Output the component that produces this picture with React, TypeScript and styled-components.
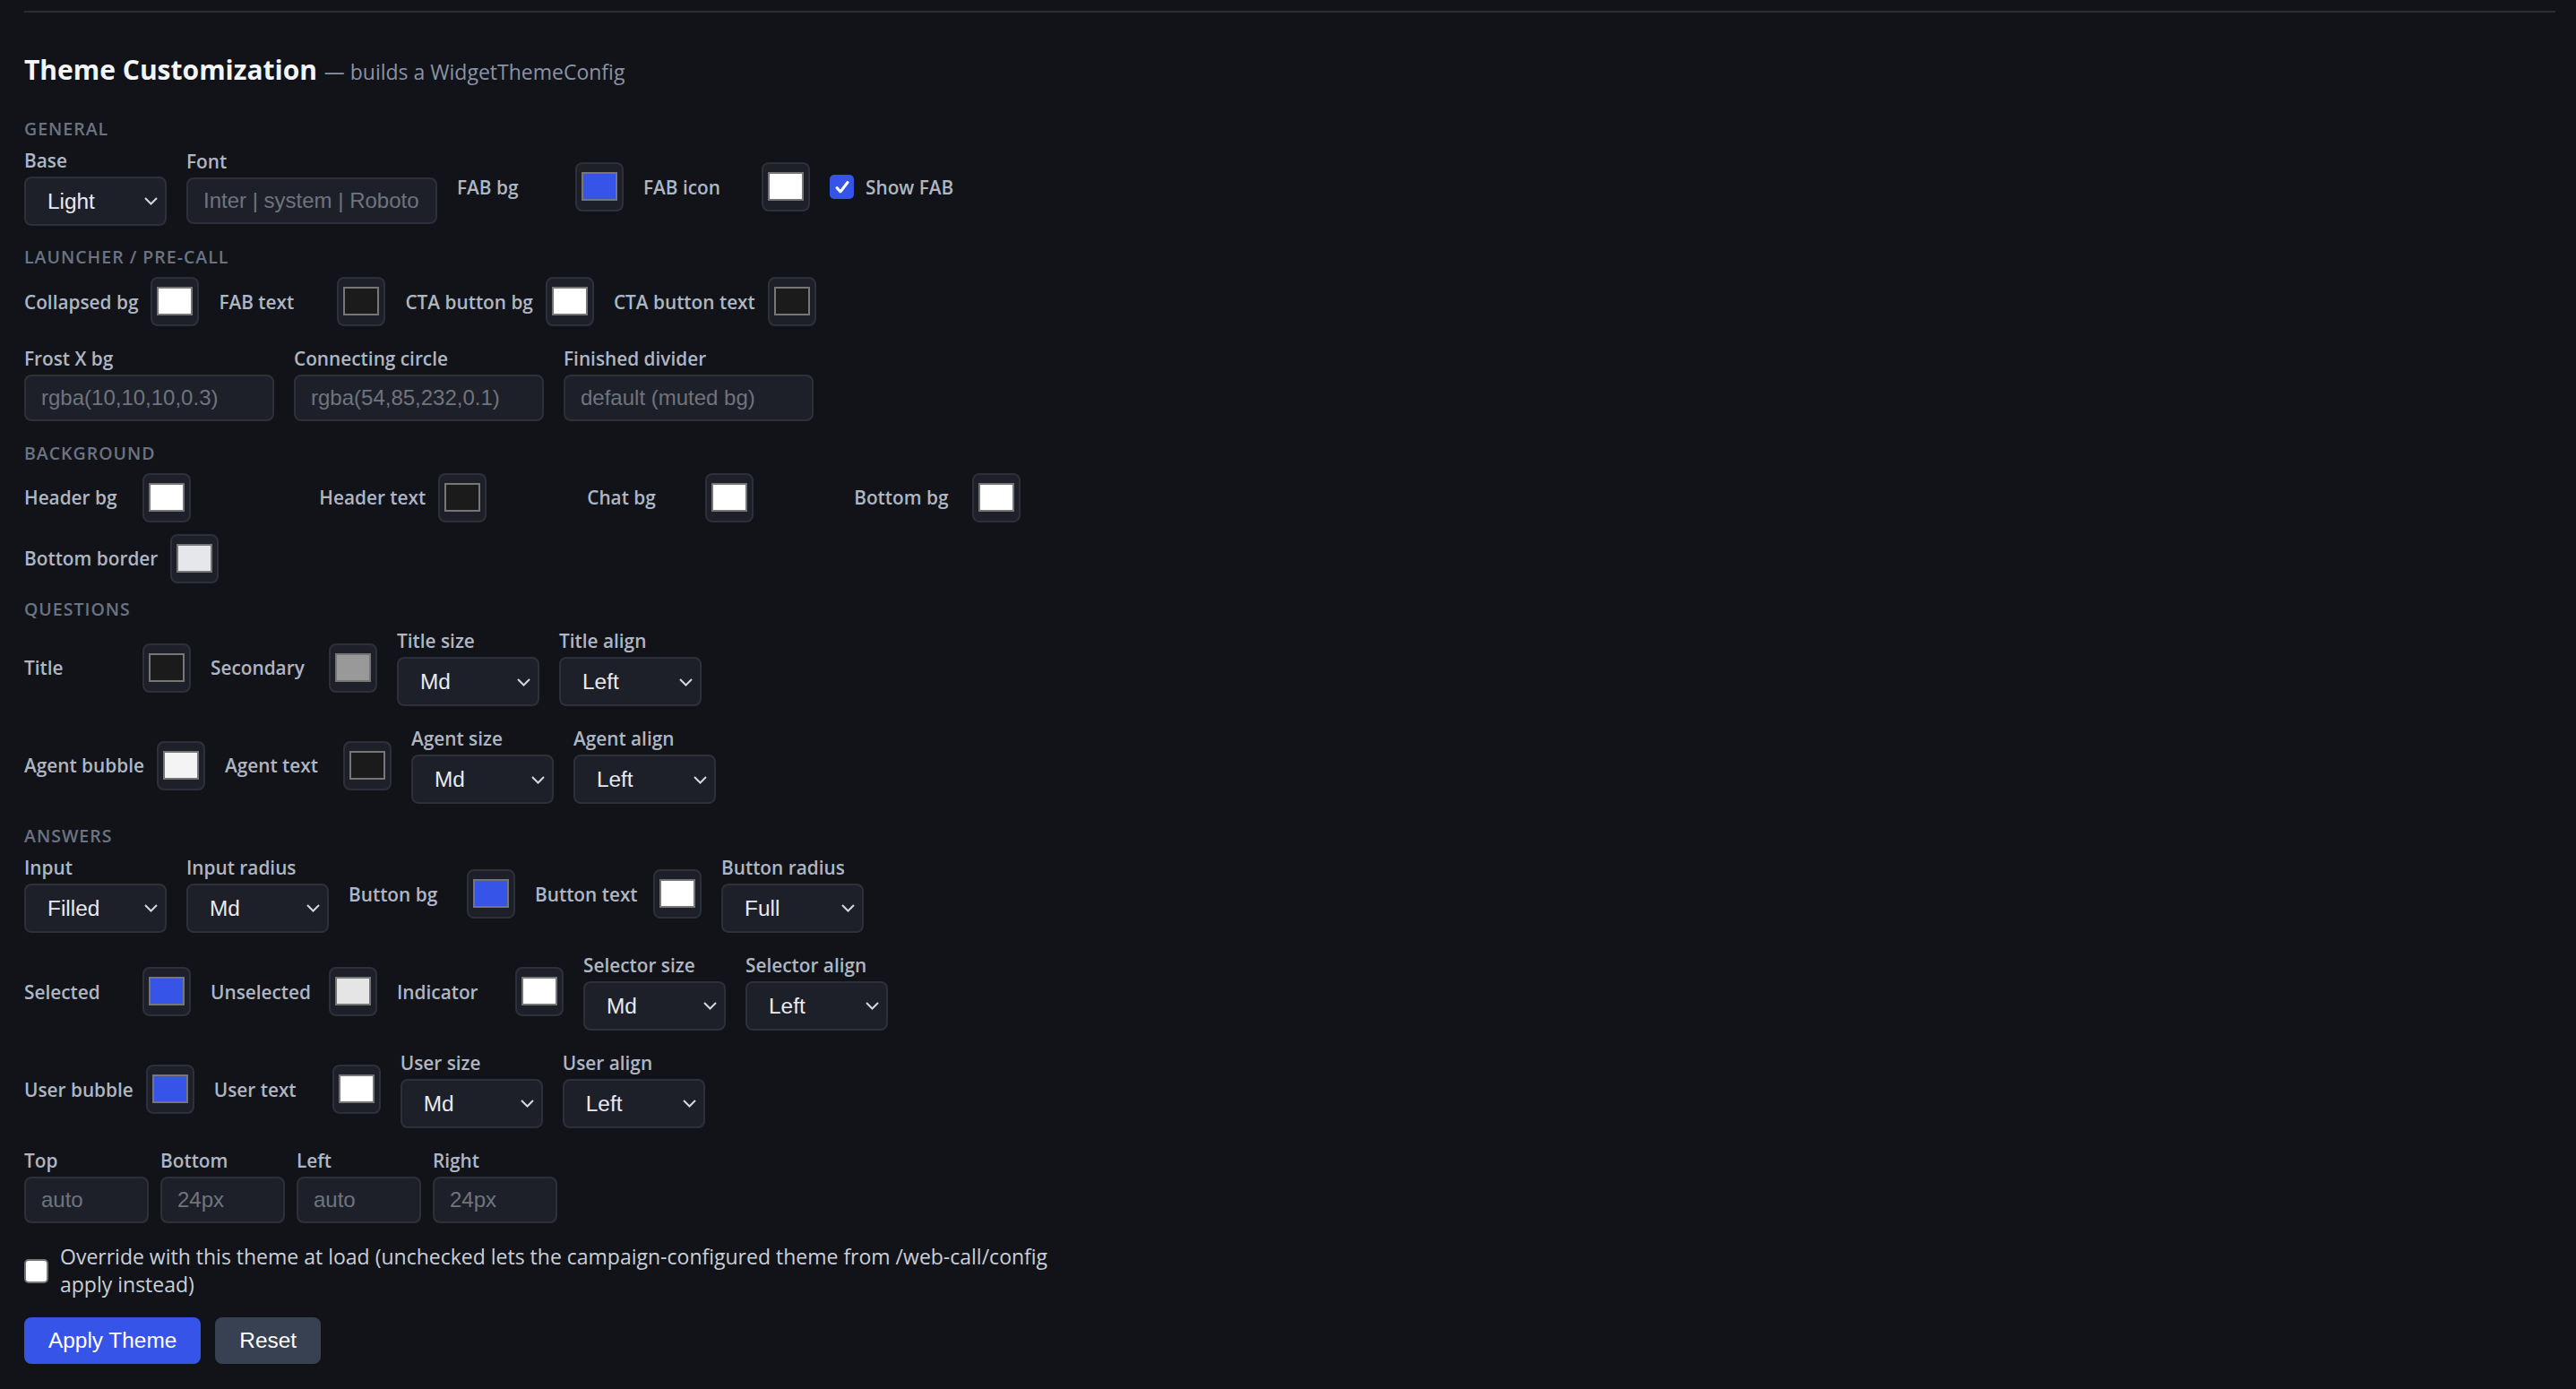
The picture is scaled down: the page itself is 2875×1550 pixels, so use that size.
import styled, { createGlobalStyle } from 'styled-components'

const BLUE = '#3655e8'
const DARK = '#1b1b1b'
const WHITE = '#ffffff'

const GlobalStyle = createGlobalStyle`
  html, body {
    margin: 0;
    background: #111318;
  }
  body {
    font-family: 'Open Sans', 'Noto Sans', sans-serif;
    color: #aeb6c3;
  }
`

const Page = styled.main`
  padding: 12px 23px 40px 27px;
`

const Panel = styled.section`
  border-top: 2px solid #2a2d36;
  padding-top: 46px;
`

const Title = styled.h2`
  margin: 0;
  font-size: 30px;
  line-height: 36px;
  font-weight: 700;
  color: #f4f5f7;
`

const Subtitle = styled.span`
  font-size: 23px;
  line-height: 1;
  font-weight: 400;
  color: #8a93a6;
`

const Form = styled.div`
  margin-top: 34.5px;
  display: flex;
  flex-direction: column;
  gap: 22.5px;
`

const Section = styled.div``

const SectionLabel = styled.div`
  margin-bottom: 9px;
  font-size: 19.5px;
  line-height: 26px;
  font-weight: 600;
  letter-spacing: 1px;
  text-transform: uppercase;
  color: #6b7383;
`

const Rows = styled.div`
  display: flex;
  flex-direction: column;
  gap: 23px;
`

const Row = styled.div`
  display: flex;
  align-items: center;
  gap: 22px;
`

const SwatchGrid = styled.div`
  display: grid;
  grid-template-columns: repeat(4, max-content);
  column-gap: 112px;
  row-gap: 13px;
  margin-bottom: -6px;
`

const PositionRow = styled.div`
  display: flex;
  gap: 13px;
`

const Field = styled.label`
  display: flex;
  flex-direction: column;
  gap: 5px;
`

const Label = styled.span`
  font-size: 20.8px;
  line-height: 26px;
  font-weight: 600;
  color: #aeb6c3;
  white-space: nowrap;
`

const ColorGroup = styled.label`
  display: flex;
  align-items: center;
  gap: 14px;
`

const ColorLabel = styled(Label)`
  min-width: 118px;
`

const Swatch = styled.span<{ $color: string }>`
  display: flex;
  box-sizing: border-box;
  width: 54px;
  height: 55px;
  padding: 9px 5px 10px;
  border: 2px solid #2d303a;
  border-radius: 8px;
  background: #1e2029;

  &::after {
    content: '';
    flex: 1;
    border: 2px solid #767676;
    background: ${(p) => p.$color};
  }
`

const SelectWrap = styled.span<{ $width: number }>`
  position: relative;
  display: block;
  width: ${(p) => p.$width}px;
`

const Select = styled.select`
  appearance: none;
  display: block;
  box-sizing: border-box;
  width: 100%;
  height: 55px;
  margin: 0;
  padding: 0 40px 0 24px;
  border: 2px solid #2d303a;
  border-radius: 8px;
  background: #1e2029;
  color: #e8eaee;
  font: 24.4px 'Liberation Sans', Arial, sans-serif;
  outline: none;
`

const Chevron = styled.svg`
  position: absolute;
  right: 9px;
  top: 50%;
  margin-top: -5px;
  pointer-events: none;
`

const TextInput = styled.input<{ $width: number }>`
  box-sizing: border-box;
  width: ${(p) => p.$width}px;
  height: 52px;
  margin: 0;
  padding: 0 16px 0 17px;
  border: 2px solid #2d303a;
  border-radius: 8px;
  background: #1e2029;
  color: #e8eaee;
  font: 24px 'Liberation Sans', Arial, sans-serif;
  outline: none;

  &::placeholder {
    color: #6f747d;
  }
`

const CheckRow = styled.label<{ $maxWidth?: number }>`
  display: flex;
  align-items: center;
  gap: 13px;
  max-width: ${(p) => (p.$maxWidth ? `${p.$maxWidth}px` : 'none')};
`

const CheckBox = styled.span<{ $checked?: boolean }>`
  flex: none;
  box-sizing: border-box;
  display: flex;
  align-items: center;
  justify-content: center;
  width: 27px;
  height: 27px;
  border-radius: 5px;
  background: ${(p) => (p.$checked ? BLUE : '#ffffff')};
  border: ${(p) => (p.$checked ? 'none' : '2px solid #767676')};
`

const OverrideText = styled.span`
  font-size: 23px;
  line-height: 31px;
  color: #c9cfd9;
`

const Actions = styled.div`
  display: flex;
  gap: 16px;
  margin-top: 21px;
`

const Button = styled.button<{ $variant?: 'primary' | 'secondary' }>`
  height: 52px;
  padding: 0 27px;
  border: none;
  border-radius: 8px;
  font: 24.4px 'Liberation Sans', Arial, sans-serif;
  color: #ffffff;
  background: ${(p) => (p.$variant === 'secondary' ? '#384151' : BLUE)};
  cursor: pointer;
`

const SIZES = ['Sm', 'Md', 'Lg']
const ALIGNS = ['Left', 'Center', 'Right']
const RADII = ['None', 'Sm', 'Md', 'Lg', 'Full']

function ColorField({ label, color }: { label: string; color: string }) {
  return (
    <ColorGroup>
      <ColorLabel>{label}</ColorLabel>
      <Swatch $color={color} />
    </ColorGroup>
  )
}

function SelectField({ label, value, options }: { label: string; value: string; options: string[] }) {
  return (
    <Field>
      <Label>{label}</Label>
      <SelectWrap $width={159}>
        <Select defaultValue={value}>
          {options.map((o) => (
            <option key={o}>{o}</option>
          ))}
        </Select>
        <Chevron width="17" height="11" viewBox="0 0 17 11">
          <polyline points="2,2 8.5,8.5 15,2" fill="none" stroke="#d4d8de" strokeWidth="2" />
        </Chevron>
      </SelectWrap>
    </Field>
  )
}

function TextField({ label, placeholder, width }: { label: string; placeholder: string; width: number }) {
  return (
    <Field>
      <Label>{label}</Label>
      <TextInput $width={width} placeholder={placeholder} />
    </Field>
  )
}

function Check({ checked }: { checked?: boolean }) {
  return (
    <CheckBox $checked={checked}>
      {checked && (
        <svg width="20" height="20" viewBox="0 0 20 20">
          <polyline points="4,10.5 8,15 16,4.5" fill="none" stroke="#fff" strokeWidth="3" strokeLinecap="round" strokeLinejoin="round" />
        </svg>
      )}
    </CheckBox>
  )
}

export default function App() {
  return (
    <>
      <GlobalStyle />
      <Page>
        <Panel>
          <Title>
            Theme Customization <Subtitle>— builds a WidgetThemeConfig</Subtitle>
          </Title>

          <Form>
            <Section>
              <SectionLabel>General</SectionLabel>
              <Rows>
                <Row>
                  <SelectField label="Base" value="Light" options={['Light', 'Dark']} />
                  <TextField label="Font" placeholder="Inter | system | Roboto" width={280} />
                  <ColorField label="FAB bg" color={BLUE} />
                  <ColorField label="FAB icon" color={WHITE} />
                  <CheckRow>
                    <Check checked />
                    <Label>Show FAB</Label>
                  </CheckRow>
                </Row>
              </Rows>
            </Section>

            <Section>
              <SectionLabel>Launcher / Pre-call</SectionLabel>
              <Rows>
                <Row>
                  <ColorField label="Collapsed bg" color={WHITE} />
                  <ColorField label="FAB text" color={DARK} />
                  <ColorField label="CTA button bg" color={WHITE} />
                  <ColorField label="CTA button text" color={DARK} />
                </Row>
                <Row>
                  <TextField label="Frost X bg" placeholder="rgba(10,10,10,0.3)" width={279} />
                  <TextField label="Connecting circle" placeholder="rgba(54,85,232,0.1)" width={279} />
                  <TextField label="Finished divider" placeholder="default (muted bg)" width={279} />
                </Row>
              </Rows>
            </Section>

            <Section>
              <SectionLabel>Background</SectionLabel>
              <SwatchGrid>
                <ColorField label="Header bg" color={WHITE} />
                <ColorField label="Header text" color={DARK} />
                <ColorField label="Chat bg" color={WHITE} />
                <ColorField label="Bottom bg" color={WHITE} />
                <ColorField label="Bottom border" color="#e5e7eb" />
              </SwatchGrid>
            </Section>

            <Section>
              <SectionLabel>Questions</SectionLabel>
              <Rows>
                <Row>
                  <ColorField label="Title" color={DARK} />
                  <ColorField label="Secondary" color="#999999" />
                  <SelectField label="Title size" value="Md" options={SIZES} />
                  <SelectField label="Title align" value="Left" options={ALIGNS} />
                </Row>
                <Row>
                  <ColorField label="Agent bubble" color="#f4f4f5" />
                  <ColorField label="Agent text" color={DARK} />
                  <SelectField label="Agent size" value="Md" options={SIZES} />
                  <SelectField label="Agent align" value="Left" options={ALIGNS} />
                </Row>
              </Rows>
            </Section>

            <Section>
              <SectionLabel>Answers</SectionLabel>
              <Rows>
                <Row>
                  <SelectField label="Input" value="Filled" options={['Filled', 'Outlined']} />
                  <SelectField label="Input radius" value="Md" options={RADII} />
                  <ColorField label="Button bg" color={BLUE} />
                  <ColorField label="Button text" color={WHITE} />
                  <SelectField label="Button radius" value="Full" options={RADII} />
                </Row>
                <Row>
                  <ColorField label="Selected" color={BLUE} />
                  <ColorField label="Unselected" color="#e5e5e5" />
                  <ColorField label="Indicator" color={WHITE} />
                  <SelectField label="Selector size" value="Md" options={SIZES} />
                  <SelectField label="Selector align" value="Left" options={ALIGNS} />
                </Row>
                <Row>
                  <ColorField label="User bubble" color={BLUE} />
                  <ColorField label="User text" color={WHITE} />
                  <SelectField label="User size" value="Md" options={SIZES} />
                  <SelectField label="User align" value="Left" options={ALIGNS} />
                </Row>
                <PositionRow>
                  <TextField label="Top" placeholder="auto" width={139} />
                  <TextField label="Bottom" placeholder="24px" width={139} />
                  <TextField label="Left" placeholder="auto" width={139} />
                  <TextField label="Right" placeholder="24px" width={139} />
                </PositionRow>
              </Rows>
            </Section>

            <CheckRow $maxWidth={1170}>
              <Check />
              <OverrideText>
                Override with this theme at load (unchecked lets the campaign-configured theme from /web-call/config
                apply instead)
              </OverrideText>
            </CheckRow>
          </Form>

          <Actions>
            <Button>Apply Theme</Button>
            <Button $variant="secondary">Reset</Button>
          </Actions>
        </Panel>
      </Page>
    </>
  )
}
